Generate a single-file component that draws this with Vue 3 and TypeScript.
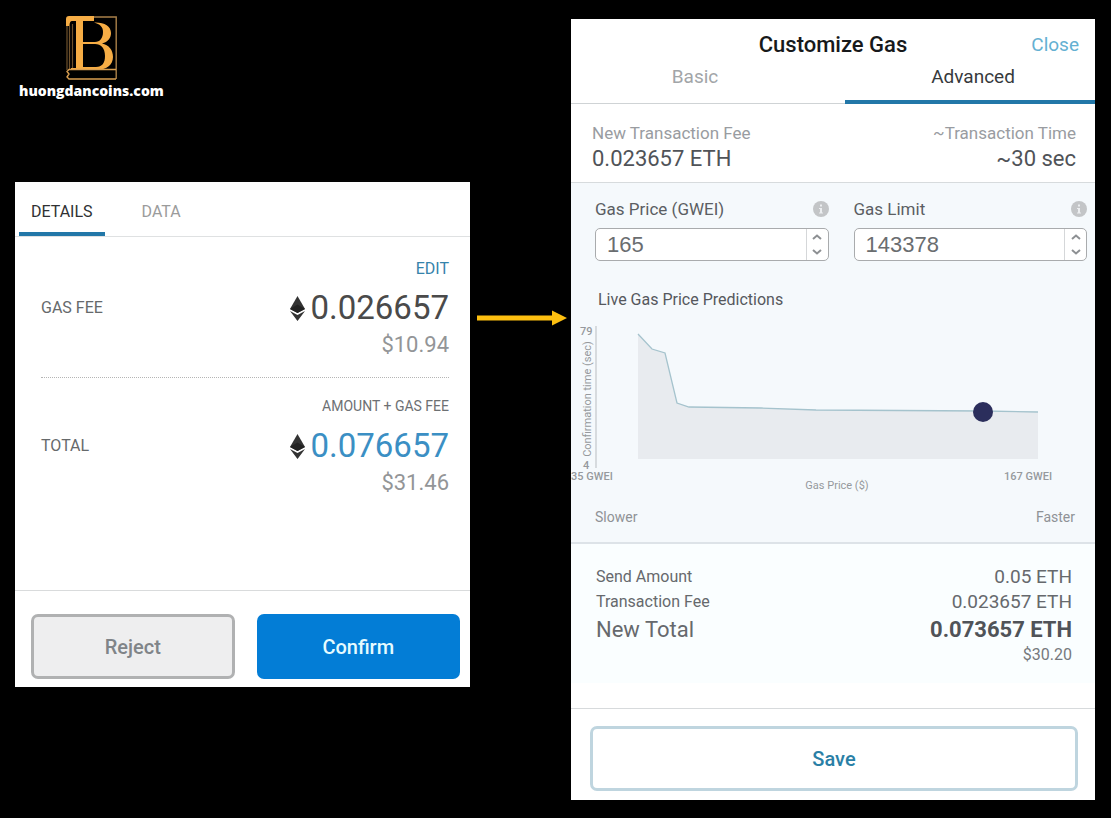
<script setup lang="ts">
import { computed, ref } from 'vue'

interface FeeRow {
  label: string
  hint: string
  eth: string
  usd: string
  editable: boolean
}

const feeRows: FeeRow[] = [
  { label: 'GAS FEE', hint: 'EDIT', eth: '0.026657', usd: '$10.94', editable: true },
  { label: 'TOTAL', hint: 'AMOUNT + GAS FEE', eth: '0.076657', usd: '$31.46', editable: false },
]

const fields = ref([
  { id: 'gas-price', label: 'Gas Price (GWEI)', value: 165 },
  { id: 'gas-limit', label: 'Gas Limit', value: 143378 },
])

const summary = [
  { label: 'Send Amount', value: '0.05 ETH', total: false },
  { label: 'Transaction Fee', value: '0.023657 ETH', total: false },
  { label: 'New Total', value: '0.073657 ETH', total: true },
]

const detailTab = ref('DETAILS')
const gasTab = ref('Advanced')

const baseline = 139
const curve: [number, number][] = [
  [67, 14], [81, 29], [94, 33], [106, 83], [118, 87],
  [190, 88], [245, 90], [412, 91], [467, 92],
]
const linePoints = computed(() => curve.map((p) => p.join(',')).join(' '))
const areaPoints = computed(() => `67,${baseline} ${linePoints.value} 467,${baseline}`)
</script>

<template>
  <main class="page">
    <div class="left">
      <header class="brand">
        <svg class="brand-logo" viewBox="0 0 51 64" aria-hidden="true">
          <path d="M28 1H50.2V63" fill="none" stroke="#a98049" stroke-width="1.4" />
          <path d="M1 10V54M3.5 10V53M6.5 8V53" fill="none" stroke="#6e512c" stroke-width="1.2" />
          <path d="M0 10V3Q0 0 3 0H28V5H6Q3.5 5 3.5 10Z" fill="#f6ad45" />
          <path
            fill="#f6ad45"
            fill-rule="evenodd"
            d="M10 4H17V26H29C34 26 37 22 37 16C37 11 34 8 28 6.5C38 6 45 10 45 17C45 22 42 26 36 27.5C43 29 47 34 47 41C47 49 40 54 31 54H5V52H10ZM17 28V51H30C36 51 39 47 39 40C39 32 35 28 29 28Z"
          />
          <path d="M50 53.5H3L1 55.5L3 58L1 61L3 63H50" fill="none" stroke="#d99f50" stroke-width="1.4" />
        </svg>
        <span class="brand-name">huongdancoins.com</span>
      </header>

      <section class="card confirm-card" aria-label="Confirm transaction">
        <div class="detail-tabs" role="tablist">
          <button
            v-for="tab in ['DETAILS', 'DATA']"
            :key="tab"
            type="button"
            role="tab"
            class="detail-tab"
            :class="{ active: detailTab === tab }"
            :aria-selected="detailTab === tab"
            @click="detailTab = tab"
          >
            {{ tab }}
          </button>
        </div>

        <div class="fee-list">
          <div v-for="row in feeRows" :key="row.label" class="fee-row">
            <span class="fee-label">{{ row.label }}</span>
            <div class="fee-amounts">
              <a v-if="row.editable" class="edit" href="#">{{ row.hint }}</a>
              <span v-else class="hint">{{ row.hint }}</span>
              <span class="eth" :class="{ accent: !row.editable }">
                <svg class="eth-icon" viewBox="0 0 15 25" aria-hidden="true">
                  <path d="M7.5 0L15 13L7.5 17L0 13Z" fill="#333" />
                  <path d="M7.5 8.5L15 13L7.5 17L0 13Z" fill="#222" />
                  <path d="M0 15L7.5 19L15 15L7.5 25Z" fill="#333" />
                </svg>
                {{ row.eth }}
              </span>
              <span class="usd">{{ row.usd }}</span>
            </div>
          </div>
        </div>

        <footer class="confirm-actions">
          <button type="button" class="btn reject">Reject</button>
          <button type="button" class="btn confirm">Confirm</button>
        </footer>
      </section>
    </div>

    <div class="link-arrow" aria-hidden="true">
      <svg viewBox="0 0 90 16">
        <path d="M0 5.5H75V0.5L90 8L75 15.5V10.5H0Z" fill="#fdbf10" />
      </svg>
    </div>

    <section class="card gas-card" aria-label="Customize Gas">
      <header class="gas-header">
        <h1>Customize Gas</h1>
        <a class="close" href="#">Close</a>
      </header>
      <div class="gas-tabs" role="tablist">
        <button
          v-for="tab in ['Basic', 'Advanced']"
          :key="tab"
          type="button"
          role="tab"
          class="gas-tab"
          :class="{ active: gasTab === tab }"
          :aria-selected="gasTab === tab"
          @click="gasTab = tab"
        >
          {{ tab }}
        </button>
      </div>

      <dl class="estimate">
        <div>
          <dt>New Transaction Fee</dt>
          <dd>0.023657 ETH</dd>
        </div>
        <div class="time">
          <dt>~Transaction Time</dt>
          <dd>~30 sec</dd>
        </div>
      </dl>

      <div class="gas-body">
        <div class="fields">
          <div v-for="field in fields" :key="field.id" class="field">
            <div class="field-head">
              <label :for="field.id">{{ field.label }}</label>
              <svg class="info" viewBox="0 0 16 16" aria-hidden="true">
                <circle cx="8" cy="8" r="8" fill="#c3c5c7" />
                <path d="M7 3.5H9V5.5H7ZM6 7H9V11.5H10V12.5H6V11.5H7V8H6Z" fill="#eceef0" />
              </svg>
            </div>
            <div class="number">
              <input :id="field.id" v-model.number="field.value" type="text" inputmode="numeric" />
              <div class="steppers">
                <button type="button" aria-label="Increase" @click="field.value++">
                  <svg viewBox="0 0 10 6"><path d="M1 5L5 1.5L9 5" /></svg>
                </button>
                <button type="button" aria-label="Decrease" @click="field.value--">
                  <svg viewBox="0 0 10 6"><path d="M1 1L5 4.5L9 1" /></svg>
                </button>
              </div>
            </div>
          </div>
        </div>

        <h2>Live Gas Price Predictions</h2>
        <svg class="chart" viewBox="0 0 524 176" role="img" aria-label="Live gas price predictions">
          <polygon :points="areaPoints" fill="#e8ebef" />
          <polyline :points="linePoints" fill="none" stroke="#a5c3cd" stroke-width="1.3" />
          <path d="M25 6V148" stroke="#b9bdc1" stroke-width="1" />
          <circle cx="412" cy="92" r="10" fill="#2b2e5c" />
          <g class="ticks">
            <text x="9" y="15">79</text>
            <text x="12" y="149">4</text>
            <text x="0" y="160">35 GWEI</text>
            <text x="433" y="160">167 GWEI</text>
          </g>
          <g class="axis-names">
            <text x="266" y="169" text-anchor="middle">Gas Price ($)</text>
            <text transform="translate(20 79) rotate(-90)" text-anchor="middle">Confirmation time (sec)</text>
          </g>
        </svg>
        <div class="speed">
          <span>Slower</span>
          <span>Faster</span>
        </div>
      </div>

      <dl class="summary">
        <div v-for="row in summary" :key="row.label" class="summary-row" :class="{ total: row.total }">
          <dt>{{ row.label }}</dt>
          <dd>{{ row.value }}</dd>
        </div>
        <div class="fiat">$30.20</div>
      </dl>

      <footer class="save-bar">
        <button type="button" class="btn save">Save</button>
      </footer>
    </section>
  </main>
</template>

<style>
html,
body {
  background: #000;
}
</style>

<style scoped>
* {
  box-sizing: border-box;
}

.page {
  display: grid;
  grid-template-columns: minmax(0, 455fr) 101px minmax(0, 524fr);
  align-items: start;
  padding: 16px 16px 18px 15px;
  font-family: Roboto, "Liberation Sans", sans-serif;
  color: #4f5257;
}

button {
  font: inherit;
  cursor: pointer;
}

a {
  text-decoration: none;
}

h1,
h2,
dl,
dd {
  margin: 0;
}

.card {
  background: #fff;
}

.brand {
  display: flex;
  flex-direction: column;
  align-items: center;
  width: max-content;
  padding-left: 4px;
  margin-bottom: 80px;
}

.brand-logo {
  width: 51px;
  height: 64px;
}

.brand-name {
  font: 800 14px/22px "Open Sans", "Noto Sans", sans-serif;
  color: #fff;
}

.detail-tabs {
  display: flex;
  gap: 26px;
  height: 55px;
  padding: 0 4px;
  border-top: 8px solid #fafafa;
  border-bottom: 1px solid #dfe1e2;
}

.detail-tab {
  padding: 1px 11px 0;
  border: 0;
  border-bottom: 4px solid transparent;
  background: none;
  font-size: 16px;
  line-height: 41px;
  color: #9b9b9b;
}

.detail-tab.active {
  padding: 1px 12px 0;
  border-color: #2277a8;
  color: #2f3133;
}

.fee-list {
  min-height: 353px;
  padding: 20px 21px 0 26px;
}

.fee-row {
  display: flex;
  justify-content: space-between;
  padding-bottom: 23px;
}

.fee-row + .fee-row {
  padding-top: 17px;
  border-top: 1px dotted #b5b5b5;
}

.fee-label {
  padding-top: 41px;
  font-size: 16px;
  line-height: 20px;
  color: #66696b;
}

.fee-amounts {
  display: flex;
  flex-direction: column;
  align-items: flex-end;
}

.edit {
  font-size: 16px;
  line-height: 23px;
  color: #3583ab;
}

.hint {
  font-size: 14px;
  line-height: 23px;
  color: #6d7073;
}

.eth {
  display: flex;
  align-items: center;
  gap: 5px;
  font-size: 33px;
  line-height: 56px;
  color: #4a4a4a;
}

.eth.accent {
  color: #3b8fc4;
}

.eth-icon {
  width: 15px;
  height: 25px;
}

.usd {
  font-size: 22px;
  line-height: 18px;
  color: #939597;
}

.confirm-actions {
  display: grid;
  grid-template-columns: 1fr 1fr;
  gap: 22px;
  padding: 23px 10px 8px 16px;
  border-top: 1px solid #d9dbdc;
}

.btn {
  height: 65px;
  border-radius: 7px;
  font-size: 20px;
  font-weight: 500;
}

.reject {
  border: 3px solid #b0b1b2;
  background: #eeeeef;
  color: #808488;
}

.confirm {
  border: 0;
  background: #037dd6;
  color: #e6fbff;
}

.link-arrow {
  display: flex;
  padding: 294px 4px 0 7px;
}

.link-arrow svg {
  width: 100%;
}

.gas-card {
  margin-top: 3px;
}

.gas-header {
  display: grid;
  grid-template-columns: 1fr auto 1fr;
  align-items: center;
  height: 42px;
  padding: 9px 16px 0;
}

.gas-header h1 {
  grid-column: 2;
  font-size: 22px;
  line-height: 32px;
  font-weight: 500;
  color: #17191b;
}

.close {
  justify-self: end;
  font-size: 19px;
  line-height: 32px;
  color: #64b0d2;
}

.gas-tabs {
  display: grid;
  grid-template-columns: 274fr 250fr;
  height: 43px;
}

.gas-tab {
  padding: 0 26px 10px 0;
  border: 0;
  border-bottom: 1px solid #cfd3d5;
  background: none;
  font-size: 19px;
  line-height: 26px;
  color: #a2a5a8;
}

.gas-tab.active {
  padding: 0 0 7px 6px;
  border-bottom: 4px solid #2277a8;
  color: #36393c;
}

.estimate {
  display: flex;
  justify-content: space-between;
  height: 79px;
  padding: 17px 19px 0 21px;
  border-bottom: 1px solid #d7dbdd;
}

.time {
  text-align: right;
}

.estimate dt {
  font-size: 17px;
  line-height: 24px;
  color: #999ca1;
}

.estimate dd {
  font-size: 22px;
  line-height: 28px;
  color: #505358;
}

.gas-body {
  padding-bottom: 14px;
  border-bottom: 2px solid #dde3e8;
  background: #f5f9fc;
}

.fields {
  display: grid;
  grid-template-columns: repeat(2, minmax(0, 1fr));
  gap: 25px;
  padding: 14px 8px 0 24px;
}

.field-head {
  display: flex;
  justify-content: space-between;
  align-items: center;
  margin-bottom: 7px;
  font-size: 17px;
  line-height: 24px;
  color: #5b5e63;
}

.info {
  width: 16px;
  height: 16px;
}

.number {
  display: flex;
  height: 33px;
  overflow: hidden;
  border: 1px solid #a9abad;
  border-radius: 5px;
  background: #fff;
}

.number input {
  flex: 1;
  min-width: 0;
  padding: 0 11px;
  border: 0;
  background: none;
  font: 22px "Liberation Sans", sans-serif;
  color: #6a6d70;
}

.steppers {
  display: flex;
  flex-direction: column;
  width: 22px;
  border-left: 1px solid #d5d7d9;
}

.steppers button {
  display: flex;
  flex: 1;
  justify-content: center;
  align-items: center;
  padding: 0;
  border: 0;
  background: none;
}

.steppers svg {
  width: 10px;
  height: 6px;
  fill: none;
  stroke: #8d9093;
  stroke-width: 2;
}

h2 {
  padding: 27px 27px 0;
  font-size: 16px;
  line-height: 24px;
  font-weight: 400;
  color: #55585d;
}

.chart {
  display: block;
  width: 100%;
  margin-top: 8px;
}

.ticks {
  font-size: 11px;
  font-weight: 500;
  fill: #96999d;
}

.axis-names {
  font-size: 11px;
  fill: #96999d;
}

.speed {
  display: flex;
  justify-content: space-between;
  padding: 10px 20px 0 24px;
  font-size: 14px;
  line-height: 22px;
  color: #8f9296;
}

.summary {
  padding: 20px 23px 19px 25px;
  background: #fafeff;
}

.summary-row {
  display: flex;
  justify-content: space-between;
  line-height: 25px;
  color: #66696d;
}

.summary-row dt {
  font-size: 16px;
}

.summary-row dd {
  font-size: 19px;
}

.summary-row.total {
  line-height: 31px;
}

.summary-row.total dt,
.summary-row.total dd {
  font-size: 22px;
}

.summary-row.total dd {
  font-weight: 700;
  color: #505358;
}

.fiat {
  font-size: 16px;
  line-height: 19px;
  text-align: right;
  color: #76797d;
}

.save-bar {
  padding: 17px 17px 9px 19px;
  margin-top: 25px;
  border-top: 1px solid #d7dadc;
}

.save {
  width: 100%;
  border: 3px solid #bfd5df;
  background: #fff;
  color: #2a7fa6;
}
</style>
